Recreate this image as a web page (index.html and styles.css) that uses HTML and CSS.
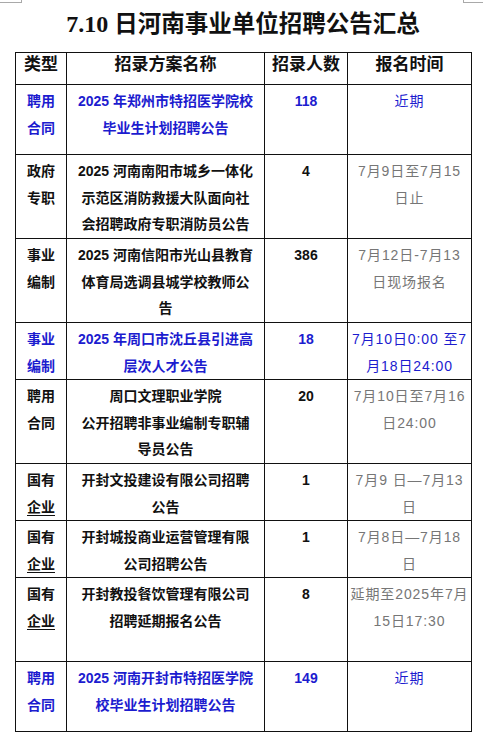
FILE: index.html
```html
<!DOCTYPE html>
<html lang="zh-CN">
<head>
<meta charset="utf-8">
<title>7.10日河南事业单位招聘公告汇总</title>
<link rel="stylesheet" href="styles.css">
</head>
<body>
<div class="marks"><span class="mark mark-left"></span><span class="mark mark-right"></span></div>
<div class="sheet">
  <h1 class="title"><span class="latin">7.10</span> 日河南事业单位招聘公告汇总</h1>
  <table class="grid">
    <colgroup>
      <col class="c-type"><col class="c-name"><col class="c-num"><col class="c-time">
    </colgroup>
    <thead>
      <tr class="head">
        <th>类型</th><th>招录方案名称</th><th>招录人数</th><th>报名时间</th>
      </tr>
    </thead>
    <tbody>
      <tr class="h70 blue">
        <td class="type">聘用<br>合同</td>
        <td class="name">2025 年郑州市特招医学院校<br>毕业生计划招聘公告</td>
        <td class="num">118</td>
        <td class="time">近期</td>
      </tr>
      <tr class="h84">
        <td class="type">政府<br>专职</td>
        <td class="name">2025 河南南阳市城乡一体化<br>示范区消防救援大队面向社<br>会招聘政府专职消防员公告</td>
        <td class="num">4</td>
        <td class="time gray">7月9日至7月15<br>日止</td>
      </tr>
      <tr class="h84">
        <td class="type">事业<br>编制</td>
        <td class="name">2025 河南信阳市光山县教育<br>体育局选调县城学校教师公<br>告</td>
        <td class="num">386</td>
        <td class="time gray">7月12日-7月13<br>日现场报名</td>
      </tr>
      <tr class="h55 blue">
        <td class="type">事业<br>编制</td>
        <td class="name">2025 年周口市沈丘县引进高<br>层次人才公告</td>
        <td class="num">18</td>
        <td class="time">7月10日0:00 至7<br>月18日24:00</td>
      </tr>
      <tr class="h84">
        <td class="type">聘用<br>合同</td>
        <td class="name">周口文理职业学院<br>公开招聘非事业编制专职辅<br>导员公告</td>
        <td class="num">20</td>
        <td class="time gray">7月10日至7月16<br>日24:00</td>
      </tr>
      <tr class="h56">
        <td class="type">国有<br><u>企业</u></td>
        <td class="name">开封文投建设有限公司招聘<br>公告</td>
        <td class="num">1</td>
        <td class="time gray">7月9 日—7月13<br>日</td>
      </tr>
      <tr class="h56">
        <td class="type">国有<br><u>企业</u></td>
        <td class="name">开封城投商业运营管理有限<br>公司招聘公告</td>
        <td class="num">1</td>
        <td class="time gray">7月8日—7月18<br>日</td>
      </tr>
      <tr class="h84">
        <td class="type">国有<br><u>企业</u></td>
        <td class="name">开封教投餐饮管理有限公司<br>招聘延期报名公告</td>
        <td class="num">8</td>
        <td class="time gray">延期至2025年7月<br>15日17:30</td>
      </tr>
      <tr class="h70 blue">
        <td class="type">聘用<br>合同</td>
        <td class="name">2025 河南开封市特招医学院<br>校毕业生计划招聘公告</td>
        <td class="num">149</td>
        <td class="time">近期</td>
      </tr>
    </tbody>
  </table>
</div>
</body>
</html>
```

FILE: styles.css
```css
html, body {
  margin: 0;
  padding: 0;
  background: #ffffff;
}

body {
  width: 483px;
  font-family: "Liberation Sans", "Noto Sans CJK SC", sans-serif;
  color: #111111;
}

.marks {
  display: flex;
  justify-content: space-between;
  height: 3px;
}

.mark {
  display: block;
  height: 2px;
  border-bottom: 1px solid #a9a9a9;
}

.mark-left {
  width: 21px;
  border-right: 1px solid #a9a9a9;
}

.mark-right {
  width: 19px;
  border-left: 1px solid #a9a9a9;
}

.sheet {
  margin: 0 12px 0 15px;
}

.title {
  margin: 6px 0 13px;
  font-family: "Liberation Serif", "Noto Sans CJK SC", serif;
  font-size: 23.5px;
  line-height: 30px;
  font-weight: 700;
  text-align: center;
  color: #111111;
}

.title .latin {
  font-family: "Liberation Serif", serif;
  font-size: 24px;
}

.grid {
  width: 456px;
  border-collapse: collapse;
  table-layout: fixed;
}

.c-type { width: 51px; }
.c-name { width: 198px; }
.c-num { width: 83px; }
.c-time { width: 124px; }

.grid th,
.grid td {
  border: 1px solid #111111;
  text-align: center;
  vertical-align: top;
  padding: 3px 2px 0;
}

.head {
  height: 32px;
}

.grid th {
  font-family: "Liberation Serif", "Noto Sans CJK SC", serif;
  font-size: 17px;
  line-height: 20px;
  font-weight: 700;
  padding-top: 2px;
}

.grid td {
  font-size: 14px;
  line-height: 26.5px;
}

.h55 { height: 55px; }
.h56 { height: 56px; }
.h70 { height: 70px; }
.h84 { height: 84px; }

.type {
  font-weight: 700;
}

.type u {
  text-decoration: underline;
  text-underline-offset: 3px;
}

.name {
  font-weight: 700;
  font-size: 14.4px;
}

.num {
  font-weight: 700;
}

.time {
  font-weight: 400;
  letter-spacing: 0.9px;
}

.gray {
  color: #767676;
}

.blue td {
  color: #1c1ccf;
}
```
